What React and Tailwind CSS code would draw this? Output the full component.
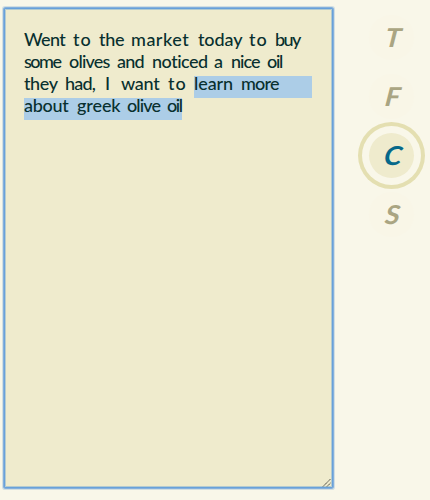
const word = 'block shrink-0 whitespace-pre';

function ResizeGrip() {
  return (
    <svg className="absolute right-[1px] bottom-0" width="9" height="9" viewBox="0 0 9 9" fill="none">
      <path d="M1 8.5L8.5 1M5 8.5L8.5 5" stroke="#3f3e36" strokeWidth="1" strokeDasharray="1.4 0.4" />
    </svg>
  );
}

function Note() {
  return (
    <div className="relative mt-[9px] ml-[5px] h-[478px] w-[327px] shrink-0 rounded-[1px] bg-[#efebcd] pt-[23px] pl-[19px] font-['Lato','Liberation_Sans',sans-serif] text-[18px] leading-[14px] font-medium text-[#08302f] shadow-[0_0_0_1px_#68a1da,0_0_0_2px_#85b0dc,0_0_0_3px_#d2dfe2,inset_0_0_0_1px_#b4cbd0]">
      <div className="flex h-[22px]">
        <span className={`${word} w-[49px] tracking-[-0.6px]`}>Went</span>
        <span className={`${word} w-[26px] tracking-[1px]`}>to</span>
        <span className={`${word} w-[32px] tracking-[-0.3px]`}>the</span>
        <span className={`${word} w-[67px] tracking-[0.5px]`}>market</span>
        <span className={`${word} w-[51px] tracking-[-0.1px]`}>today</span>
        <span className={`${word} w-[26px] tracking-[1px]`}>to</span>
        <span className={`${word} tracking-[-1.6px]`}>buy</span>
      </div>
      <div className="flex h-[22px]">
        <span className={`${word} w-[45px] tracking-[-1.5px]`}>some</span>
        <span className={`${word} w-[48px] tracking-[-0.8px]`}>olives</span>
        <span className={`${word} w-[35px] tracking-[-0.8px]`}>and</span>
        <span className={`${word} w-[62px] tracking-[-0.5px]`}>noticed</span>
        <span className={`${word} w-[17px]`}>a</span>
        <span className={`${word} w-[36px] tracking-[-1px]`}>nice</span>
        <span className={`${word} tracking-[-1.3px]`}>oil</span>
      </div>
      <div className="flex h-[22px]">
        <span className={`${word} w-[41px] tracking-[-0.4px]`}>they</span>
        <span className={`${word} w-[38px] tracking-[-0.8px]`}>had,</span>
        <span className={`${word} w-[18px] pl-[2px]`}>I</span>
        <span className={`${word} w-[47px] tracking-[-0.3px]`}>want</span>
        <span className={`${word} w-[26px] tracking-[1px]`}>to</span>
        <span className="flex w-[118px] bg-[#accde7]">
          <span className={`${word} w-[47px] tracking-[-0.1px]`}>learn</span>
          <span className={`${word} tracking-[-0.8px]`}>more</span>
        </span>
      </div>
      <div className="flex h-[22px] w-[158px] bg-[#accde7]">
        <span className={`${word} w-[53px] tracking-[-0.3px]`}>about</span>
        <span className={`${word} w-[50px] tracking-[-0.1px]`}>greek</span>
        <span className={`${word} w-[40px] tracking-[-0.9px]`}>olive</span>
        <span className={`${word} tracking-[-1.5px]`}>oil</span>
      </div>
      <ResizeGrip />
    </div>
  );
}

function Tab({ label, active }) {
  return (
    <button
      className={`flex size-[45px] items-center justify-center rounded-full pb-[2px] text-[26px] leading-none font-bold italic ${
        active
          ? 'bg-[#efebcd] text-[#06698a] shadow-[0_0_0_7px_#f9f7e9,0_0_0_11px_#e4dfb1]'
          : 'bg-[#f9f6e7] text-[#aaa582]'
      }`}
    >
      <span className="scale-x-110 -skew-x-6 pl-[3px]">{label}</span>
    </button>
  );
}

export default function App() {
  return (
    <main className="flex h-[500px] w-[430px] overflow-hidden bg-[#f9f7e9]">
      <Note />
      <nav className="mt-[15px] ml-[37px] flex flex-col gap-[14px] font-['Lato','Liberation_Sans',sans-serif]">
        <Tab label="T" />
        <Tab label="F" />
        <Tab label="C" active />
        <Tab label="S" />
      </nav>
    </main>
  );
}
